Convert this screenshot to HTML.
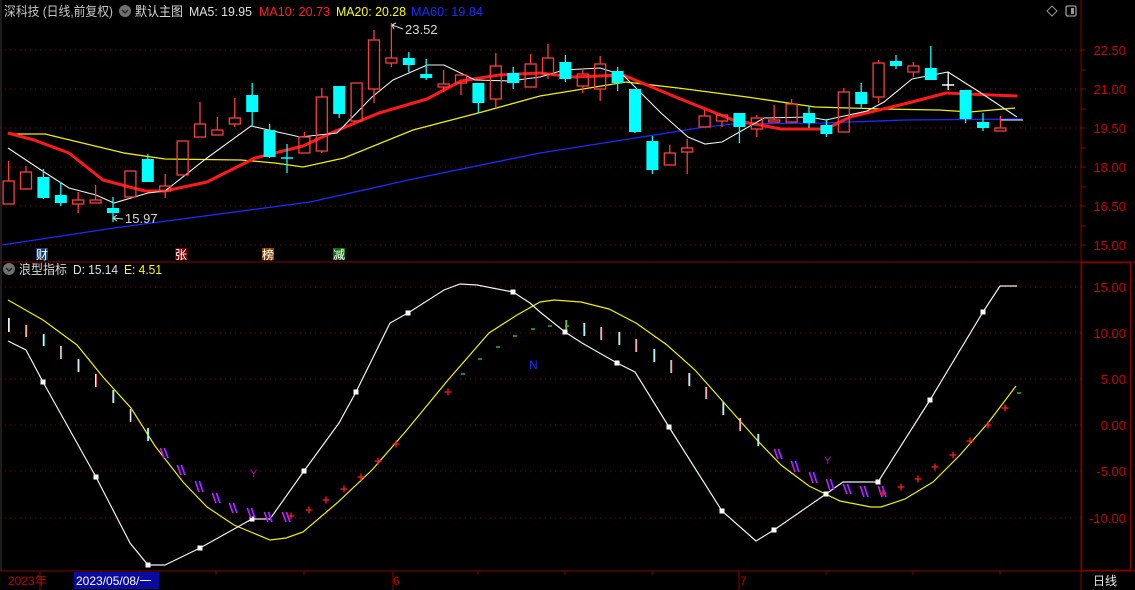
<!DOCTYPE html>
<html><head><meta charset="utf-8">
<style>
html,body{margin:0;padding:0;background:#000;}
body{width:1135px;height:590px;overflow:hidden;position:relative;font-family:"Liberation Sans","Noto Sans CJK SC",sans-serif;}
svg{position:absolute;left:0;top:0;}
</style></head>
<body>
<svg id="s" width="1135" height="590" viewBox="0 0 1135 590" xmlns="http://www.w3.org/2000/svg" font-family="Liberation Sans, Noto Sans CJK SC, sans-serif">
<rect width="1135" height="590" fill="#000"/>
<line x1="1" y1="0" x2="1" y2="571" stroke="#3a3a3a"/>
<g stroke="#8a0000" stroke-dasharray="1,4" stroke-width="1">
<line x1="0" y1="50" x2="1081" y2="50"/><line x1="0" y1="89" x2="1081" y2="89"/><line x1="0" y1="128" x2="1081" y2="128"/>
<line x1="0" y1="167" x2="1081" y2="167"/><line x1="0" y1="206" x2="1081" y2="206"/><line x1="0" y1="245" x2="1081" y2="245"/>
<line x1="0" y1="287" x2="1081" y2="287"/><line x1="0" y1="333" x2="1081" y2="333"/><line x1="0" y1="379" x2="1081" y2="379"/>
<line x1="0" y1="425" x2="1081" y2="425"/><line x1="0" y1="471" x2="1081" y2="471"/><line x1="0" y1="518" x2="1081" y2="518"/>
</g>
<line x1="1081" y1="0" x2="1081" y2="590" stroke="#8a0000"/>
<line x1="0" y1="262" x2="1135" y2="262" stroke="#8a0000"/>
<line x1="0" y1="571" x2="1135" y2="571" stroke="#8a0000"/>
<rect x="1081.5" y="262.5" width="49" height="308" fill="none" stroke="#8a0000" stroke-width="1.5"/>
<g stroke="#8a0000">
<line x1="1081" y1="70" x2="1086" y2="70"/><line x1="1081" y1="109" x2="1086" y2="109"/><line x1="1081" y1="148" x2="1086" y2="148"/>
<line x1="1081" y1="187" x2="1086" y2="187"/><line x1="1081" y1="226" x2="1086" y2="226"/>
<line x1="1081" y1="50" x2="1086" y2="50"/><line x1="1081" y1="89" x2="1086" y2="89"/><line x1="1081" y1="128" x2="1086" y2="128"/>
<line x1="1081" y1="167" x2="1086" y2="167"/><line x1="1081" y1="206" x2="1086" y2="206"/><line x1="1081" y1="245" x2="1086" y2="245"/>
<line x1="101" y1="571" x2="101" y2="575"/><line x1="140" y1="571" x2="140" y2="575"/><line x1="216" y1="571" x2="216" y2="575"/><line x1="304" y1="571" x2="304" y2="575"/>
<line x1="393" y1="571" x2="393" y2="590"/><line x1="478" y1="571" x2="478" y2="575"/><line x1="565" y1="571" x2="565" y2="575"/><line x1="652" y1="571" x2="652" y2="575"/><line x1="739" y1="571" x2="739" y2="590"/>
<line x1="826" y1="571" x2="826" y2="575"/><line x1="913" y1="571" x2="913" y2="575"/><line x1="1000" y1="571" x2="1000" y2="575"/>
<line x1="40" y1="571" x2="40" y2="590"/>
</g>
<g fill="#c80000" font-size="13" text-anchor="end">
<text x="1126" y="55">22.50</text><text x="1126" y="94">21.00</text><text x="1126" y="133">19.50</text>
<text x="1126" y="172">18.00</text><text x="1126" y="211">16.50</text><text x="1126" y="250">15.00</text>
<text x="1126" y="292">15.00</text><text x="1126" y="338">10.00</text><text x="1126" y="384">5.00</text>
<text x="1126" y="430">0.00</text><text x="1126" y="476">-5.00</text><text x="1126" y="523">-10.00</text>
</g>
<g font-size="13">
<text x="4" y="16" fill="#c8c8c8" textLength="109" lengthAdjust="spacingAndGlyphs">深科技 (日线,前复权)</text>
<circle cx="125" cy="11" r="6" fill="#707070"/><path d="M122 10 L125 13 L128 10" stroke="#222" stroke-width="1.3" fill="none"/>
<text x="135" y="16" fill="#d8d8d8" textLength="48" lengthAdjust="spacingAndGlyphs">默认主图</text>
<text x="189" y="16" fill="#e0e0e0" textLength="63" lengthAdjust="spacingAndGlyphs">MA5: 19.95</text>
<text x="259" y="16" fill="#ff2020" textLength="71" lengthAdjust="spacingAndGlyphs">MA10: 20.73</text>
<text x="336" y="16" fill="#ffff00" textLength="70" lengthAdjust="spacingAndGlyphs">MA20: 20.28</text>
<text x="411" y="16" fill="#1030ff" textLength="72" lengthAdjust="spacingAndGlyphs">MA60: 19.84</text>
</g>
<path d="M1052 6 L1057 11 L1052 16 L1047 11 Z" fill="none" stroke="#999"/>
<rect x="1066" y="6" width="10" height="10" rx="1.5" fill="none" stroke="#999" stroke-width="1.3"/><rect x="1071" y="8" width="3" height="6" fill="#999"/>
<circle cx="9" cy="269" r="6" fill="#707070"/><path d="M6 268 L9 271 L12 268" stroke="#222" stroke-width="1.3" fill="none"/>
<text x="19" y="274" font-size="13" fill="#d8d8d8" textLength="48" lengthAdjust="spacingAndGlyphs">浪型指标</text>
<text x="73" y="274" font-size="13" fill="#e0e0e0" textLength="45" lengthAdjust="spacingAndGlyphs">D: 15.14</text>
<text x="124" y="274" font-size="13" fill="#ffff00" textLength="38" lengthAdjust="spacingAndGlyphs">E: 4.51</text>
<rect x="36" y="248" width="12" height="12" fill="#16406a"/><text x="36" y="259" font-size="12" fill="#fff">财</text>
<rect x="175" y="248" width="12" height="12" fill="#7a0000"/><text x="175" y="259" font-size="12" fill="#fff">张</text>
<rect x="262" y="248" width="12" height="12" fill="#8a4a00"/><text x="262" y="259" font-size="12" fill="#fff">榜</text>
<rect x="333" y="248" width="12" height="12" fill="#107010"/><text x="333" y="259" font-size="12" fill="#fff">减</text>
<text x="8" y="585" font-size="12" fill="#c00000">2023年</text>
<rect x="74" y="572" width="85" height="17" fill="#0a0aa0"/>
<text x="76" y="585" font-size="12" fill="#fff">2023/05/08/一</text>
<text x="393" y="585" font-size="12" fill="#c00000">6</text>
<text x="740" y="585" font-size="12" fill="#c00000">7</text>
<text x="1093" y="585" font-size="12" fill="#e8e8e8">日线</text>
<polyline fill="none" stroke="#1a2cff" stroke-width="1.3" points="2,245 114,228 310,202 413,179 540,153 705,127 733,124 822,123 905,120 1022,119"/>
<polyline fill="none" stroke="#f0f000" stroke-width="1.3" points="8,134 45,134 124,153 165,159 241,160 275,163 303,167 344,158 413,130 482,112 540,96 626,82 678,88 747,97 815,107 884,109 939,110 970,112 1015,108"/>
<polyline fill="none" stroke="#ff1a1a" stroke-width="3" stroke-linejoin="round" points="8,133 34,140 69,153 103,180 145,191 165,191 207,182 255,158 303,146 331,133 379,113 427,99 461,81 499,75 540,73 574,77 623,75 678,98 733,120 781,129 826,129 850,117 912,102 946,93 967,94 1017,96"/>
<polyline fill="none" stroke="#f0f0f0" stroke-width="1.1" points="8,148 41,170 69,188 96,195 114,203 148,193 165,191 207,158 251,126 300,137 337,133 372,97 393,80 427,65 444,65 475,80 510,81 540,77 564,70 600,68 623,75 661,113 688,137 705,144 722,142 764,118 809,117 826,120 867,111 884,102 912,79 948,72 981,93 1017,117"/>
<line x1="1000" y1="120" x2="1023" y2="120" stroke="#fff"/>
<g id="candles"></g>
<path d="M113 218 L123 219" stroke="#ddd"/><path d="M113 218 L117 215 M113 218 L117 221" stroke="#ddd"/>
<text x="125" y="223" font-size="13" fill="#d8d8d8">15.97</text>
<path d="M392 25 L403 29" stroke="#ddd"/><path d="M392 25 L396 23 M392 25 L394 29" stroke="#ddd"/>
<text x="405" y="34" font-size="13" fill="#d8d8d8">23.52</text>
<polyline fill="none" stroke="#f0f000" stroke-width="1.2" points="8,300 43,320 77,345 103,377 131,408 155,446 183,482 207,507 234,525 270,540 286,538 303,532 337,503 372,470 406,431 448,380 489,333 517,315 540,302 554,300 581,302 609,309 636,323 667,345 695,370 726,405 757,440 781,465 809,486 840,501 871,507 881,507 905,499 933,482 960,455 988,423 1016,386"/>
<polyline fill="none" stroke="#f0f0f0" stroke-width="1.2" points="8,341 26,350 43,382 96,477 130,543 148,565 165,565 200,548 252,519 270,519 304,471 339,423 356,392 390,323 408,313 444,290 460,284 477,285 513,292 530,303 540,312 565,332 582,343 617,363 635,372 669,427 722,511 756,541 774,530 826,494 843,482 878,482 930,400 983,312 1000,286 1017,286"/>
<g id="marks"></g>
<text x="250" y="477" font-size="11" fill="#c000c0">Y</text>
<text x="824" y="464" font-size="11" fill="#c000c0">Y</text>
<text x="529" y="369" font-size="12" fill="#1030ff">N</text>
</svg>
<script>
var NS="http://www.w3.org/2000/svg";
function el(p,t,a){var e=document.createElementNS(NS,t);for(var k in a)e.setAttribute(k,a[k]);p.appendChild(e);return e;}
var C=[["R",181,204,161,204],["R",172,189,166,189],["C",177,198,169,199],["C",195,203,182,206],["R",200,204,192,213],["R",200,203,185,203],["C",208,213,197,222],["R",171,197,171,197],["C",159,182,154,182],["R",186,191,174,198],
["R",141,175,141,175],["R",124,137,102,137],["R",130,135,117,135],["R",118,124,98,127],["C",95,112,83,127],["C",130,157,124,158],["X",158,158,144,173,"#00ffff"],["R",137,153,132,153],["R",97,151,88,153],["C",86,114,86,118],
["R",83,121,83,121],["R",40,89,30,103],["R",58,63,23,67],["C",58,65,52,72],["C",74,78,59,80],["R",84,87,70,92],["R",75,83,75,95],["C",83,103,83,113],["R",66,99,53,108],["C",73,83,67,89],
["R",64,87,54,87],["R",58,74,44,79],["C",62,79,55,82],["R",74,86,70,93],["R",64,89,56,101],["C",71,83,67,91],["C",89,132,89,133],["C",141,170,136,174],["R",153,165,145,165],["R",148,152,139,174],
["R",116,127,110,127],["R",115,121,115,127],["C",113,127,113,143],["R",118,129,115,137],["R",120,122,105,122],["R",104,122,99,122],["C",113,123,106,128],["C",125,134,119,137],["R",92,132,88,132],["C",92,104,83,109],
["R",63,97,60,103],["C",61,66,55,69],["R",66,72,62,77],["C",68,80,46,80],["X",85,85,72,90,"#ffffff"],["C",90,119,90,123],["C",122,128,113,131],["R",128,131,116,131]];
var g=document.getElementById("candles");
C.forEach(function(c,i){var x=8.6+17.4*i;
 if(c[0]=="R"){el(g,"line",{x1:x,y1:c[3],x2:x,y2:c[1],stroke:"#ff3c3c","stroke-width":1.3});el(g,"line",{x1:x,y1:c[2],x2:x,y2:c[4],stroke:"#ff3c3c","stroke-width":1.3});
  el(g,"rect",{x:x-5.5,y:c[1],width:11,height:Math.max(c[2]-c[1],1),fill:"none",stroke:"#ff3c3c","stroke-width":1.3});}
 else if(c[0]=="C"){el(g,"line",{x1:x,y1:c[3],x2:x,y2:c[4],stroke:"#00ffff","stroke-width":1.3});el(g,"rect",{x:x-6,y:c[1],width:12,height:Math.max(c[2]-c[1],2),fill:"#00ffff"});}
 else {el(g,"line",{x1:x,y1:c[3],x2:x,y2:c[4],stroke:c[5],"stroke-width":1.3});el(g,"line",{x1:x-6,y1:c[1],x2:x+6,y2:c[1],stroke:c[5],"stroke-width":1.5});}
});
var m=document.getElementById("marks");
[[43,382],[96,477],[148,565],[200,548],[252,519],[304,471],[356,392],[408,313],[513,292],[565,332],[617,363],[669,427],[722,511],[774,530],[826,494],[878,482],[930,400],[983,312]].forEach(function(p){el(m,"rect",{x:p[0]-2.5,y:p[1]-2.5,width:5,height:5,fill:"#fff"});});
var bars=[[8.6,318,332],[26,325,337],[43.4,334,346],[60.8,346,359],[78.2,359,372],[95.6,374,387],[113,390,403],[130.4,409,422],[147.8,428,441],
[566,320,330],[584,323,336],[601,327,340],[619,332,345],[636,339,352],[654,349,362],[671,360,373],[689,373,386],[706,387,399],[723,402,415],[740,418,431],[758,434,446]];
bars.forEach(function(b,i){el(m,"line",{x1:b[0]+0.8,y1:b[1],x2:b[0]+0.8,y2:b[2],stroke:(i%2?"#ff4040":"#40ffff"),"stroke-width":1});el(m,"line",{x1:b[0],y1:b[1],x2:b[0],y2:b[2],stroke:(i==9?"#40ff40":"#f0f0f0"),"stroke-width":1.2});});
var sl=[[165,448,458],[182,465,475],[200,481,492],[217,493,503],[234,503,513],[252,508,518],[269,512,522],[287,512,522],
[779,449,459],[796,461,472],[814,472,483],[831,479,490],[848,484,494],[865,486,497],[883,486,497]];
sl.forEach(function(s){var x=s[0]-4;[0,4].forEach(function(d){el(m,"line",{x1:x+d,y1:s[1],x2:x+d+3.5,y2:s[2],stroke:"#2020ff","stroke-width":1.2});el(m,"line",{x1:x+d-0.8,y1:s[1],x2:x+d+2.7,y2:s[2],stroke:"#e020e0","stroke-width":1.2});});});
[[291,516],[309,510],[326,500],[344,489],[361,477],[378,461],[396,444],[448,392],[883,493],[901,487],[918,479],[935,467],[953,455],[970,441],[988,425],[1005,408]].forEach(function(p){el(m,"line",{x1:p[0]-3.5,y1:p[1],x2:p[0]+3.5,y2:p[1],stroke:"#ff1a1a","stroke-width":1.3});el(m,"line",{x1:p[0],y1:p[1]-3.5,x2:p[0],y2:p[1]+3.5,stroke:"#ff1a1a","stroke-width":1.3});});
[[463,374],[480,359],[498,347],[515,336],[533,329],[550,326],[567,326],[1019,393]].forEach(function(p){el(m,"line",{x1:p[0]-2,y1:p[1],x2:p[0]+2,y2:p[1],stroke:"#20e020","stroke-width":1.3});});
</script>
</body></html>
